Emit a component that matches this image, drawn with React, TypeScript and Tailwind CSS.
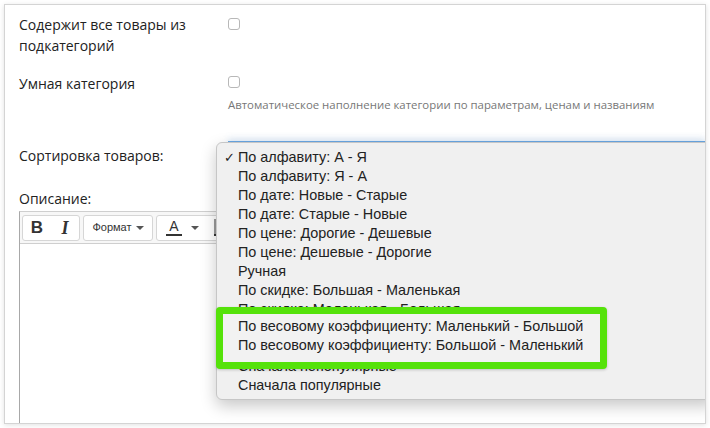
const sortOptions = [
  "По алфавиту: А - Я",
  "По алфавиту: Я - А",
  "По дате: Новые - Старые",
  "По дате: Старые - Новые",
  "По цене: Дорогие - Дешевые",
  "По цене: Дешевые - Дорогие",
  "Ручная",
  "По скидке: Большая - Маленькая",
  "По скидке: Маленькая - Большая",
  "По весовому коэффициенту: Маленький - Большой",
  "По весовому коэффициенту: Большой - Маленький",
  "Сначала непопулярные",
  "Сначала популярные",
];

function Checkbox() {
  return <div className="w-[12px] h-[12px] rounded-[3px] border border-[#b8b8b8] bg-white" />;
}

function Caret() {
  return <span className="inline-block w-0 h-0 border-l-[4px] border-r-[4px] border-t-[4px] border-l-transparent border-r-transparent border-t-[#555]" />;
}

function SortMenu() {
  return (
    <div className="absolute left-[-12px] top-[1px] w-[500px] h-[258px] rounded-[6px] border border-[#c6c6c6] bg-[#f0f0f0] shadow-[0_6px_16px_rgba(0,0,0,0.22)] pt-[5px] font-['Liberation_Sans',sans-serif] text-[14.4px] text-[#222]">
      {sortOptions.map((opt, i) => (
        <div key={opt} className="relative h-[19px] leading-[19px] pl-[21px] whitespace-nowrap">
          {i === 0 && <span className="absolute left-[7px] text-[13px]">✓</span>}
          {opt}
        </div>
      ))}
      {/* highlight box */}
      <div className="absolute left-[-1px] top-[164px] w-[391px] h-[62px] rounded-[4px] border-[7px] border-[#55e20a] bg-[#f2f2f2] pt-[3px] shadow-[0_1px_3px_rgba(0,0,0,0.2)]">
        <div className="h-[19px] leading-[19px] pl-[15px] whitespace-nowrap">{sortOptions[9]}</div>
        <div className="h-[19px] leading-[19px] pl-[15px] whitespace-nowrap">{sortOptions[10]}</div>
      </div>
    </div>
  );
}

function Toolbar() {
  const btn = "h-[25px] flex items-center justify-center";
  return (
    <div className="h-[32px] bg-[#f7f7f7] border-b border-[#cfcfcf] flex items-center gap-[3px] px-[2px]">
      <div className="flex h-[26px] rounded-[3px] border border-[#d6d6d6] bg-white">
        <div className={`${btn} w-[28px] font-['Liberation_Sans',sans-serif] font-bold text-[17px] text-[#333]`}>B</div>
        <div className={`${btn} w-[28px] font-['Liberation_Serif',serif] italic font-bold text-[18px] text-[#333]`}>I</div>
      </div>
      <div className="flex h-[26px] w-[70px] items-center justify-center gap-[4px] rounded-[3px] border border-[#d6d6d6] bg-white font-['Liberation_Sans',sans-serif] text-[11px] text-[#333]">
        Формат <Caret />
      </div>
      <div className="flex h-[26px] w-[120px] items-center rounded-[3px] border border-[#d6d6d6] bg-white font-['Liberation_Sans',sans-serif] text-[#333]">
        <div className="w-[34px] flex justify-center">
          <span className="text-[14px] leading-[15px] border-b-2 border-[#333] px-[3px]">A</span>
        </div>
        <Caret />
        <div className="ml-[12px] w-[22px] flex justify-center">
          <span className="text-[14px] leading-[15px] bg-[#9a9a9a] text-[#555] border-b-2 border-[#333] px-[3px]">A</span>
        </div>
      </div>
    </div>
  );
}

export default function App() {
  return (
    <div className="w-[710px] h-[428px] bg-white p-[4px] overflow-hidden font-['Open_Sans',sans-serif]">
      <div className="w-[702px] h-[420px] border border-[#d4d4d4] shadow-[0_1px_5px_rgba(0,0,0,0.12)] overflow-hidden bg-white pl-[14px] pt-[9px]">
        <div className="grid grid-cols-[209px_1fr]">
          <div className="text-[14px] leading-[21px] text-[#222]">
            Содержит все товары из
            <br />
            подкатегорий
          </div>
          <div className="pt-[4px]">
            <Checkbox />
          </div>
        </div>

        <div className="grid grid-cols-[209px_1fr] mt-[17px]">
          <div className="text-[14px] leading-[21px] text-[#222]">Умная категория</div>
          <div className="pt-[3px]">
            <Checkbox />
            <div className="mt-[8px] text-[11.4px] leading-[18px] text-[#777]">
              Автоматическое наполнение категории по параметрам, ценам и названиям
            </div>
          </div>
        </div>

        <div className="grid grid-cols-[209px_1fr] mt-[27px]">
          <div className="pt-[4px] text-[14px] leading-[21px] text-[#222]">Сортировка товаров:</div>
          <div className="relative h-[30px]">
            <div className="h-[30px] border-t-2 border-[#6aa8e4] shadow-[0_-3px_6px_rgba(110,165,230,0.18)] bg-white" />
            <SortMenu />
          </div>
        </div>

        <div className="mt-[17px] text-[14px] leading-[21px] text-[#222]">Описание:</div>
        <div className="mt-[2px] w-[700px] h-[220px] border border-[#a8a8a8] border-t-[#cfcfcf]">
          <Toolbar />
        </div>
      </div>
    </div>
  );
}
